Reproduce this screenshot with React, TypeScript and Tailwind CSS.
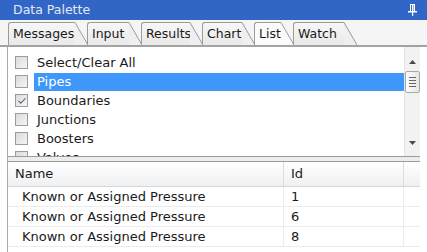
import { Check } from "lucide-react";

const tabs = [
  { label: "Messages", w: "w-[67px]" },
  { label: "Input", w: "w-[42px]" },
  { label: "Results", w: "w-[49px]" },
  { label: "Chart", w: "w-[40px]" },
  { label: "List", w: "w-[27px]", active: true },
  { label: "Watch", w: "w-[51px]" },
];

const listItems = [
  { label: "Select/Clear All" },
  { label: "Pipes", selected: true },
  { label: "Boundaries", checked: true },
  { label: "Junctions" },
  { label: "Boosters" },
  { label: "Valves" },
];

const rows = [
  { name: "Known or Assigned Pressure", id: 1 },
  { name: "Known or Assigned Pressure", id: 6 },
  { name: "Known or Assigned Pressure", id: 8 },
];

function Tab({ label, w, active }: { label: string; w: string; active?: boolean }) {
  const fill = active ? "#fbfbfb" : "#efefef";
  return (
    <div className="-mr-[1px] flex h-[23px] items-stretch">
      <div
        className={`${w} flex items-center rounded-tl-[3px] border-l border-t border-[#9b9b9b] pl-[4px] pt-[1px] ${
          active ? "bg-[#fbfbfb]" : "bg-gradient-to-b from-[#f7f7f7] to-[#e9e9e9]"
        }`}
      >
        {label}
      </div>
      <svg width="13" height="23" viewBox="0 0 13 23" className="block">
        <polygon points="0,0 1,0 13,23 0,23" fill={fill} />
        <line x1="0" y1="0.5" x2="13" y2="23" stroke="#9b9b9b" strokeWidth="1" />
      </svg>
    </div>
  );
}

function Checkbox({ checked }: { checked?: boolean }) {
  return (
    <div className="flex h-[13px] w-[13px] shrink-0 items-center justify-center border border-[#9a9ca0] bg-gradient-to-br from-[#d9dadc] to-[#f6f6f6]">
      {checked && <Check size={10} strokeWidth={2.5} className="text-[#4a5a7a]" />}
    </div>
  );
}

export default function App() {
  return (
    <div className="flex h-[252px] w-[427px] flex-col overflow-hidden bg-white font-['DejaVu_Sans',sans-serif] text-[#1a1a1a]">
      {/* title */}
      <div className="flex h-[20px] shrink-0 items-center justify-between bg-[#3166c7] pl-[13px] pr-[10px] text-[12.5px] text-[#e3e9f6]">
        <span>Data Palette</span>
        <svg width="9" height="12" viewBox="0 0 9 12" className="block">
          <rect x="2.5" y="0.5" width="4" height="7" fill="none" stroke="#fff" />
          <rect x="4" y="1" width="1.5" height="6" fill="#fff" />
          <rect x="0" y="7" width="9" height="1.5" fill="#fff" />
          <rect x="4" y="8" width="1.2" height="4" fill="#fff" />
        </svg>
      </div>

      {/* tabs */}
      <div className="flex h-[27px] shrink-0 items-end border-b-2 border-[#a3a3a3] bg-[#f5f5f5] pl-[8px] text-[12.5px]">
        {tabs.map((t) => (
          <Tab key={t.label} {...t} />
        ))}
      </div>

      {/* body */}
      <div className="mr-[7px] ml-[7px] flex flex-1 flex-col border-l border-[#a8a8a8]">
        {/* list */}
        <div className="flex h-[109px] shrink-0 overflow-hidden text-[13px]">
          <div className="flex flex-1 flex-col pt-[6px]">
            {listItems.map((it) => (
              <div key={it.label} className="flex h-[19px] shrink-0 items-center pl-[7px]">
                <Checkbox checked={it.checked} />
                <div
                  className={`ml-[6px] flex h-[18px] flex-1 items-center pl-[3px] ${
                    it.selected ? "bg-[#3f97fb] text-white" : ""
                  }`}
                >
                  {it.label}
                </div>
              </div>
            ))}
          </div>
          <div className="flex w-[16px] shrink-0 flex-col items-center border-l border-[#e4e4e4] bg-[#f2f2f2]">
            <svg width="7" height="4" viewBox="0 0 7 4" className="mt-[13px] block">
              <polygon points="3.5,0 7,4 0,4" fill="#4a4a4a" />
            </svg>
            <div className="mt-[7px] flex h-[22px] w-[15px] flex-col items-center justify-center gap-[2px] rounded-[2px] border border-[#a9a9a9] bg-gradient-to-r from-[#fdfdfd] to-[#e6e6e6]">
              <div className="h-px w-[7px] bg-[#666]" />
              <div className="h-px w-[7px] bg-[#666]" />
              <div className="h-px w-[7px] bg-[#666]" />
              <div className="h-px w-[7px] bg-[#666]" />
            </div>
            <svg width="7" height="4" viewBox="0 0 7 4" className="mt-[48px] block">
              <polygon points="0,0 7,0 3.5,4" fill="#4a4a4a" />
            </svg>
          </div>
        </div>

        {/* splitter */}
        <div className="h-[6px] shrink-0 border-y border-[#9c9c9c] bg-[#ececec]" />

        {/* grid header */}
        <div className="flex h-[25px] shrink-0 border-b border-[#d6d6d6] bg-gradient-to-b from-[#ffffff] to-[#eef0f2] text-[13px]">
          <div className="flex w-[276px] items-center border-r border-[#dcdcdc] pl-[7px]">Name</div>
          <div className="flex w-[120px] items-center border-r border-[#dcdcdc] pl-[7px]">Id</div>
          <div className="flex-1" />
        </div>

        {/* rows */}
        {rows.map((r) => (
          <div key={r.id} className="flex h-[20px] shrink-0 border-b border-[#ececec] text-[13px]">
            <div className="flex w-[276px] items-center border-r border-[#ececec] pl-[14px]">{r.name}</div>
            <div className="flex w-[120px] items-center border-r border-[#ececec] pl-[7px]">{r.id}</div>
            <div className="flex-1" />
          </div>
        ))}
      </div>
    </div>
  );
}
